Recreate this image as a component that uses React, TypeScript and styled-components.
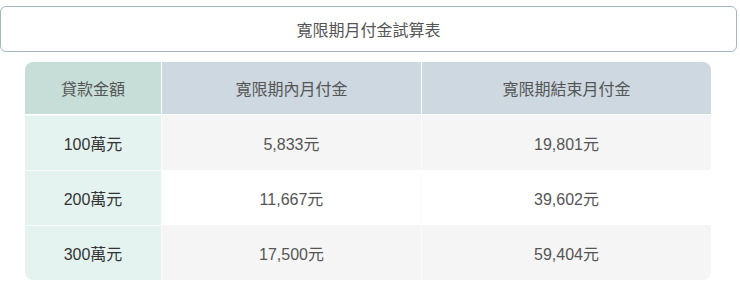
import * as React from 'react';
import styled, { createGlobalStyle } from 'styled-components';

const GlobalStyle = createGlobalStyle`
    body {
        margin: 0;
        background: #ffffff;
        font-family: "Liberation Sans", "Noto Sans CJK TC", sans-serif;
    }
`;

const Page = styled.div`
    width: 740px;
    padding-top: 6px;
`;

const TitleBox = styled.div`
    box-sizing: border-box;
    width: 737px;
    height: 46px;
    border: 1px solid #a3b6c4;
    border-radius: 6px;
    display: flex;
    align-items: center;
    justify-content: center;
    font-size: 16px;
    color: #555555;
`;

const Table = styled.div`
    display: grid;
    grid-template-columns: 136px 260px 290px;
    width: 686px;
    margin: 10px 0 0 25px;
    border-radius: 8px;
    overflow: hidden;
`;

const HeadCell = styled.div<{ $first?: boolean }>`
    box-sizing: border-box;
    height: 53px;
    display: flex;
    align-items: center;
    justify-content: center;
    font-size: 16px;
    color: #555555;
    background: ${(p) => (p.$first ? '#c6ded7' : '#cdd8e0')};
    border-left: ${(p) => (p.$first ? 'none' : '1px solid #ffffff')};
    border-bottom: 1px solid #ffffff;
`;

const BodyCell = styled.div<{ $first?: boolean; $striped?: boolean }>`
    box-sizing: border-box;
    height: 55px;
    display: flex;
    align-items: center;
    justify-content: center;
    font-size: 16px;
    color: ${(p) => (p.$first ? '#333333' : '#555555')};
    background: ${(p) =>
        p.$first ? '#e4f3f0' : p.$striped ? '#f5f5f5' : '#ffffff'};
    border-left: ${(p) => (p.$first ? 'none' : '1px solid #fbfbfb')};
    border-top: ${(p) => (p.$first ? '1px solid #f4fbf9' : 'none')};
`;

const rows = [
    { amount: '100萬元', during: '5,833元', after: '19,801元' },
    { amount: '200萬元', during: '11,667元', after: '39,602元' },
    { amount: '300萬元', during: '17,500元', after: '59,404元' },
];

function App(): React.ReactElement {
    return (
        <Page>
            <GlobalStyle />
            <TitleBox>寬限期月付金試算表</TitleBox>
            <Table>
                <HeadCell $first>貸款金額</HeadCell>
                <HeadCell>寬限期內月付金</HeadCell>
                <HeadCell>寬限期結束月付金</HeadCell>
                {rows.map((row, i) => (
                    <React.Fragment key={row.amount}>
                        <BodyCell $first>{row.amount}</BodyCell>
                        <BodyCell $striped={i % 2 === 0}>{row.during}</BodyCell>
                        <BodyCell $striped={i % 2 === 0}>{row.after}</BodyCell>
                    </React.Fragment>
                ))}
            </Table>
        </Page>
    );
}

export default App;
